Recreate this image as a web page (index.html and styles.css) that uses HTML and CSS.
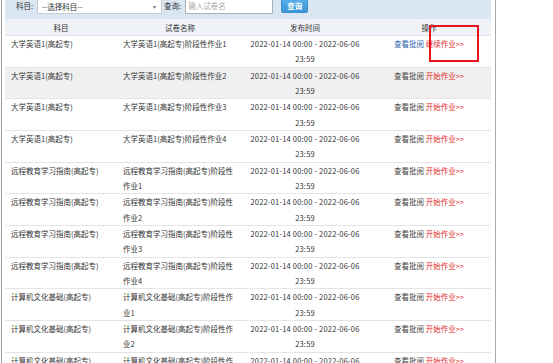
FILE: index.html
```html
<!DOCTYPE html>
<html lang="zh-CN">
<head>
  <meta charset="UTF-8">
  <title>在线作业</title>
  <link rel="stylesheet" href="styles.css">
</head>
<body>
  <div class="frame">
    <div class="toolbar">
      <span class="lbl">科目:</span>
      <div class="select">--选择科目--<span class="arrow">▾</span></div>
      <span class="lbl lbl-q">查询:</span>
      <input class="search" type="text" placeholder="输入试卷名">
      <button class="btn">查询</button>
    </div>

    <table class="list">
      <colgroup>
        <col class="c1"><col class="c2"><col class="c3"><col class="c4">
      </colgroup>
      <thead>
        <tr><th>科目</th><th>试卷名称</th><th>发布时间</th><th>操作</th></tr>
      </thead>
      <tbody>
        <tr>
          <td>大学英语1(高起专)</td>
          <td>大学英语1(高起专)阶段性作业1</td>
          <td class="time">2022-01-14 00:00 - 2022-06-06 23:59</td>
          <td class="op"><a class="view seen">查看批阅</a> <a class="go">继续作业&gt;&gt;</a></td>
        </tr>
        <tr class="hover">
          <td>大学英语1(高起专)</td>
          <td>大学英语1(高起专)阶段性作业2</td>
          <td class="time">2022-01-14 00:00 - 2022-06-06 23:59</td>
          <td class="op"><a class="view">查看批阅</a> <a class="go">开始作业&gt;&gt;</a></td>
        </tr>
        <tr>
          <td>大学英语1(高起专)</td>
          <td>大学英语1(高起专)阶段性作业3</td>
          <td class="time">2022-01-14 00:00 - 2022-06-06 23:59</td>
          <td class="op"><a class="view">查看批阅</a> <a class="go">开始作业&gt;&gt;</a></td>
        </tr>
        <tr>
          <td>大学英语1(高起专)</td>
          <td>大学英语1(高起专)阶段性作业4</td>
          <td class="time">2022-01-14 00:00 - 2022-06-06 23:59</td>
          <td class="op"><a class="view">查看批阅</a> <a class="go">开始作业&gt;&gt;</a></td>
        </tr>
        <tr>
          <td>远程教育学习指南(高起专)</td>
          <td>远程教育学习指南(高起专)阶段性作业1</td>
          <td class="time">2022-01-14 00:00 - 2022-06-06 23:59</td>
          <td class="op"><a class="view">查看批阅</a> <a class="go">开始作业&gt;&gt;</a></td>
        </tr>
        <tr>
          <td>远程教育学习指南(高起专)</td>
          <td>远程教育学习指南(高起专)阶段性作业2</td>
          <td class="time">2022-01-14 00:00 - 2022-06-06 23:59</td>
          <td class="op"><a class="view">查看批阅</a> <a class="go">开始作业&gt;&gt;</a></td>
        </tr>
        <tr>
          <td>远程教育学习指南(高起专)</td>
          <td>远程教育学习指南(高起专)阶段性作业3</td>
          <td class="time">2022-01-14 00:00 - 2022-06-06 23:59</td>
          <td class="op"><a class="view">查看批阅</a> <a class="go">开始作业&gt;&gt;</a></td>
        </tr>
        <tr>
          <td>远程教育学习指南(高起专)</td>
          <td>远程教育学习指南(高起专)阶段性作业4</td>
          <td class="time">2022-01-14 00:00 - 2022-06-06 23:59</td>
          <td class="op"><a class="view">查看批阅</a> <a class="go">开始作业&gt;&gt;</a></td>
        </tr>
        <tr>
          <td>计算机文化基础(高起专)</td>
          <td>计算机文化基础(高起专)阶段性作业1</td>
          <td class="time">2022-01-14 00:00 - 2022-06-06 23:59</td>
          <td class="op"><a class="view">查看批阅</a> <a class="go">开始作业&gt;&gt;</a></td>
        </tr>
        <tr>
          <td>计算机文化基础(高起专)</td>
          <td>计算机文化基础(高起专)阶段性作业2</td>
          <td class="time">2022-01-14 00:00 - 2022-06-06 23:59</td>
          <td class="op"><a class="view">查看批阅</a> <a class="go">开始作业&gt;&gt;</a></td>
        </tr>
        <tr>
          <td>计算机文化基础(高起专)</td>
          <td>计算机文化基础(高起专)阶段性作业3</td>
          <td class="time">2022-01-14 00:00 - 2022-06-06 23:59</td>
          <td class="op"><a class="view">查看批阅</a> <a class="go">开始作业&gt;&gt;</a></td>
        </tr>
      </tbody>
    </table>

    <!-- red box drawn over the screenshot -->
    <div class="mark"></div>
  </div>
</body>
</html>
```

FILE: styles.css
```css
html, body {
  margin: 0;
  height: 100%;
  overflow: hidden;
  background: #fff;
}
body {
  font-family: "Noto Sans CJK SC", sans-serif;
  font-size: 7.5px;
  color: #333;
}
.frame {
  position: relative;
  margin-left: 1px;
  width: 486px;
  height: 100%;
  padding: 0 4px 0 3px;
  border-left: 1px solid #9a9a9a;
  border-right: 1px solid #a8a8a8;
}
.toolbar {
  display: flex;
  align-items: flex-end;
  height: 14px;
  padding: 0 0 5px 11px;
  background: #dbe6f3;
}
.lbl {
  height: 17px;
  line-height: 17px;
  margin-right: 4px;
  color: #333;
}
.lbl-q {
  margin-left: 2px;
}
.select {
  position: relative;
  box-sizing: border-box;
  width: 125px;
  height: 17px;
  line-height: 17px;
  padding-left: 4px;
  background: #fff;
  border: 1px solid #c6ccd4;
  color: #333;
}
.arrow {
  position: absolute;
  right: 5px;
  top: 0;
  font-size: 6px;
  color: #777;
}
.search {
  box-sizing: border-box;
  width: 88px;
  height: 17px;
  margin: 0 8px 0 0;
  padding: 0 2px;
  border: 1px solid #a9b0b8;
  font-family: inherit;
  font-size: 7.5px;
}
.search::placeholder {
  color: #aaa;
}
.btn {
  box-sizing: border-box;
  width: 27px;
  height: 16px;
  margin-bottom: 1px;
  padding: 0;
  border: 1px solid #3a8fcf;
  border-radius: 2px;
  background: linear-gradient(#5ab0ea, #3996d8);
  color: #fff;
  font-family: inherit;
  font-size: 7.5px;
  font-weight: bold;
}
.list {
  width: 486px;
  table-layout: fixed;
  border-collapse: collapse;
}
.c1 { width: 112px; }
.c2 { width: 126px; }
.c3 { width: 124px; }
.c4 { width: 124px; }
.list th {
  padding: 2px 0 0;
  line-height: 14px;
  font-weight: normal;
  background: #eff2f6;
  border-bottom: 1px solid #dde2e8;
}
.list td {
  padding: 0 6px;
  line-height: 15.33px;
  vertical-align: top;
  border-bottom: 1px solid #e4e4e4;
}
.list tr.hover td {
  background: #f0f0f0;
}
.list td.time {
  text-align: center;
  letter-spacing: 0.2px;
  padding: 0 4px;
}
.list td.op {
  text-align: center;
  padding: 0;
}
.view {
  color: #444;
}
.view.seen {
  color: #2d65ad;
}
.go {
  color: #e12b2b;
}
.mark {
  position: absolute;
  left: 427px;
  top: 25px;
  width: 46px;
  height: 33px;
  border: 2px solid #e8141b;
}
```
